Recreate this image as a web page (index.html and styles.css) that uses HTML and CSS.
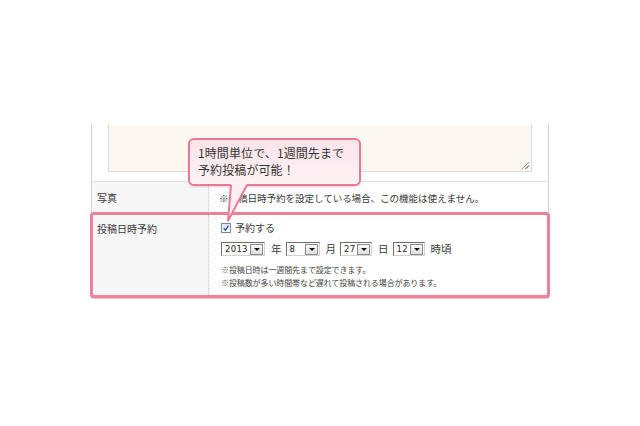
FILE: index.html
```html
<!DOCTYPE html>
<html lang="ja">
<head>
<meta charset="utf-8">
<title>投稿日時予約</title>
<link rel="stylesheet" href="styles.css">
</head>
<body>
<div class="stage">
  <div class="panel">
    <div class="memo-area">
      <div class="textarea"><span class="grip"></span></div>
    </div>
    <div class="row photo">
      <div class="label">写真</div>
      <div class="value">※投稿日時予約を設定している場合、この機能は使えません。</div>
    </div>
    <div class="row reserve">
      <div class="label">投稿日時予約</div>
      <div class="value">
        <div class="check-line">
          <span class="checkbox"><svg viewBox="0 0 10 10" width="10" height="10"><path d="M2 5.2 L4.1 7.6 L8 2.2" fill="none" stroke="#2456c4" stroke-width="1.7"/></svg></span>
          <span class="check-label">予約する</span>
        </div>
        <div class="date-line">
          <span class="select w44"><span class="sel-text">2013</span><span class="sel-btn"></span></span>
          <span class="unit">年</span>
          <span class="select w34"><span class="sel-text">8</span><span class="sel-btn"></span></span>
          <span class="unit">月</span>
          <span class="select w32"><span class="sel-text">27</span><span class="sel-btn"></span></span>
          <span class="unit">日</span>
          <span class="select w32"><span class="sel-text">12</span><span class="sel-btn"></span></span>
          <span class="unit">時頃</span>
        </div>
        <div class="notes">
          <p>※投稿日時は一週間先まで設定できます。</p>
          <p>※投稿数が多い時間帯など遅れて投稿される場合があります。</p>
        </div>
      </div>
    </div>
  </div>
  <div class="callout">1時間単位で、1週間先まで<br>予約投稿が可能！</div>
  <svg class="tail" width="30" height="42" viewBox="0 0 30 42">
    <polygon points="6,0 22,0 3,37" fill="#fdf0f4"/>
    <polyline points="6,1 3,37 22,1" fill="none" stroke="#e87a95" stroke-width="2" stroke-linejoin="miter"/>
  </svg>
</div>
</body>
</html>
```
FILE: styles.css
```css
* { box-sizing: border-box; }
html, body { margin: 0; padding: 0; background: #fff; }
body { font-family: "Noto Sans CJK JP", "Noto Sans", sans-serif; color: #333; }

.stage { position: relative; width: 640px; height: 426px; padding-top: 125px; }

.panel {
  margin-left: 91px;
  width: 458px;
  border-left: 1px solid #d6d6d6;
  border-right: 1px solid #d6d6d6;
  background: #fff;
}

.memo-area { height: 56px; padding: 0 16px; }
.textarea {
  position: relative;
  height: 47px;
  border: 1px solid #dcdcdc;
  border-top: none;
  background: #fcf7f1;
}
.grip {
  position: absolute; right: 2px; bottom: 2px; width: 7px; height: 7px;
  background: linear-gradient(135deg, transparent 45%, #999 45%, #999 55%, transparent 55%, transparent 70%, #999 70%, #999 80%, transparent 80%);
}

.row { display: flex; }
.label {
  width: 117px;
  flex: none;
  background: #f7f7f7;
  border-right: 1px dotted #c8c8c8;
  padding-left: 5px;
  font-size: 10px;
  color: #3a3a3a;
}
.value { flex: 1; padding-left: 11px; color: #3a3a3a; }

.photo { border-top: 1px solid #e2e2e2; height: 32px; }
.photo .label, .photo .value { display: flex; align-items: center; }
.photo .value { font-size: 9.6px; letter-spacing: -0.1px; padding-left: 10px; }

.reserve {
  margin: -1px -2px 0;
  height: 86px;
  border: 3px solid #ec839b;
  border-radius: 4px;
  box-shadow: 0 1px 1px rgba(200, 80, 110, 0.35);
  position: relative;
  background: #fff;
}
.reserve .label { width: 116px; padding-left: 4px; padding-top: 7px; line-height: 13px; border-top-left-radius: 2px; border-bottom-left-radius: 2px; }
.reserve .value { padding-top: 6px; padding-left: 12px; }

.check-line { display: flex; align-items: center; height: 14px; }
.checkbox {
  width: 10px; height: 10px;
  border: 1px solid #7d8796;
  background: linear-gradient(#dfe6ef, #fff);
  display: inline-flex; align-items: center; justify-content: center;
  margin-right: 4px;
}
.checkbox svg { display: block; width: 8px; height: 8px; }
.check-label { font-size: 10px; line-height: 14px; }

.date-line { display: flex; align-items: center; height: 14px; margin-top: 7px; }
.select {
  display: inline-flex; align-items: center; justify-content: space-between;
  height: 14px;
  border: 1px solid;
  border-color: #6e6e6e #d2d2d2 #d2d2d2 #6e6e6e;
  background: #fff;
  padding: 0 1px 0 3px;
}
.w44 { width: 44px; }
.w34 { width: 34px; }
.w32 { width: 32px; }
.sel-text { font-family: "DejaVu Sans", sans-serif; font-size: 8.5px; line-height: 11px; color: #222; letter-spacing: 0.3px; }
.sel-btn {
  position: relative;
  width: 13px; height: 11px;
  border: 1px solid #8a8a8a;
  background: linear-gradient(#fafafa, #dedede);
}
.sel-btn::after {
  content: ""; position: absolute; left: 3px; top: 3px;
  border-left: 3px solid transparent; border-right: 3px solid transparent;
  border-top: 3px solid #111;
}
.unit { font-size: 10.5px; margin: 0 4px 0 6px; line-height: 14px; }

.notes { margin-top: 7px; }
.notes p { margin: 0; font-size: 8px; line-height: 13px; color: #444; letter-spacing: -0.1px; }

.callout {
  position: absolute;
  left: 188px; top: 138px;
  width: 173px; height: 48px;
  border: 2px solid #e87a95;
  border-radius: 6px;
  background: linear-gradient(#fde3ea, #fff3f6);
  box-shadow: 0 1px 2px rgba(180, 80, 100, 0.25);
  padding: 4px 8px;
  font-size: 12px;
  line-height: 17px;
  color: #333;
  letter-spacing: 0.1px;
}
.tail { position: absolute; left: 225px; top: 184px; overflow: visible; }
```
